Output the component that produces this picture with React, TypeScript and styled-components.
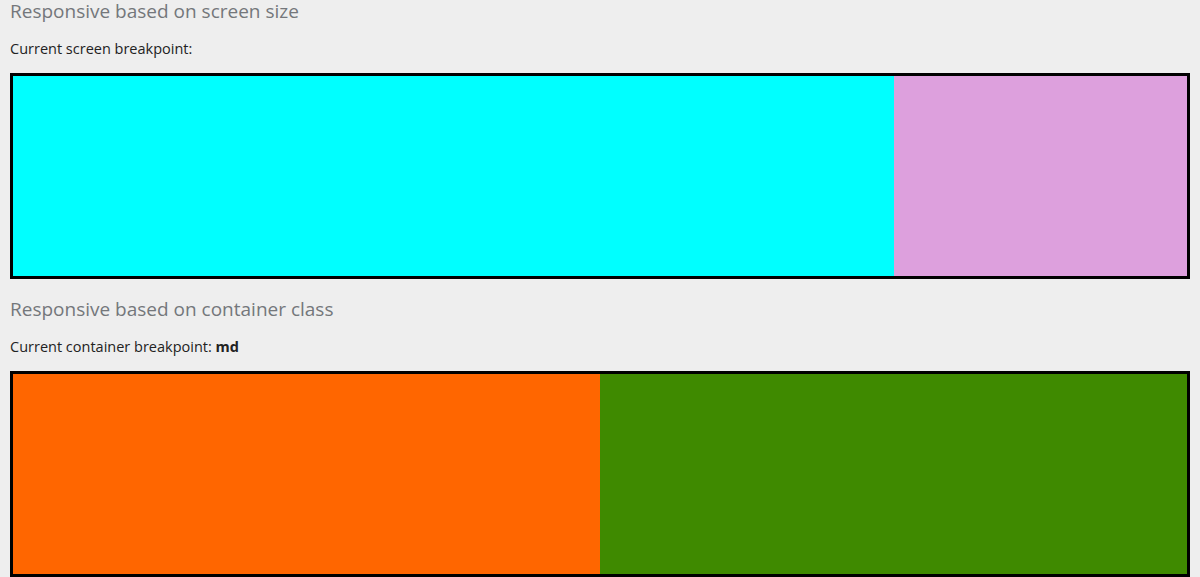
import React from "react";
import styled, { createGlobalStyle } from "styled-components";

const Global = createGlobalStyle`
  html, body { margin: 0; padding: 0; background: #eeeeee; }
  body { font-family: "Open Sans", Lato, sans-serif; color: #222; }
`;

const Page = styled.div`
  padding: 0 10px;
  display: flex;
  flex-direction: column;
  gap: 19px;
`;

const Section = styled.section`
  display: flex;
  flex-direction: column;
`;

const Heading = styled.h2`
  margin: 0;
  font-size: 19px;
  line-height: 23px;
  font-weight: 400;
  color: #74777b;
`;

const Label = styled.p`
  margin: 17px 0 15px;
  font-size: 14.5px;
  line-height: 18px;
  color: #222;
`;

const Frame = styled.div`
  border: 3px solid #000;
  height: 200px;
  display: flex;
`;

const Cell = styled.div<{ $bg: string; $grow: number }>`
  flex: ${(p) => p.$grow} 1 0;
  background: ${(p) => p.$bg};
`;

export default function App() {
  return (
    <>
      <Global />
      <Page>
        <Section>
          <Heading>Responsive based on screen size</Heading>
          <Label>Current screen breakpoint: </Label>
          <Frame>
            <Cell $bg="#00ffff" $grow={3} />
            <Cell $bg="#dda0dd" $grow={1} />
          </Frame>
        </Section>
        <Section>
          <Heading>Responsive based on container class</Heading>
          <Label>
            Current container breakpoint: <b>md</b>
          </Label>
          <Frame>
            <Cell $bg="#ff6600" $grow={1} />
            <Cell $bg="#3f8a00" $grow={1} />
          </Frame>
        </Section>
      </Page>
    </>
  );
}
